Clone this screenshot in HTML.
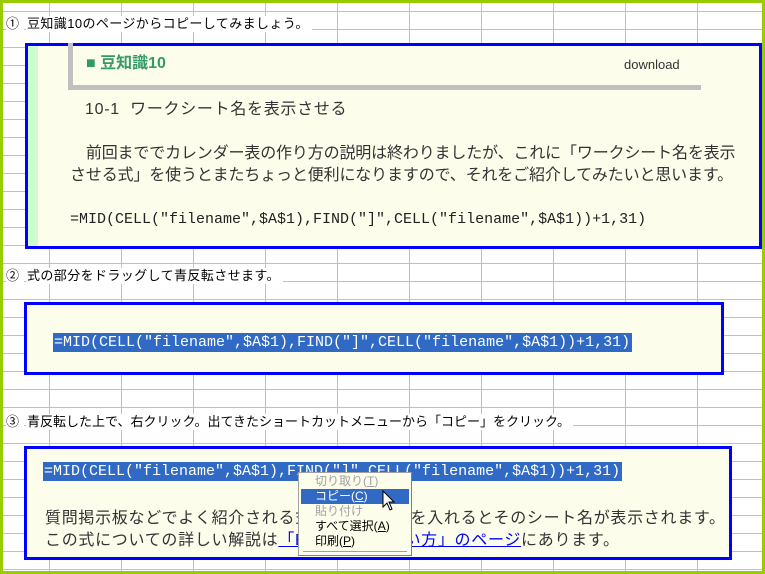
<!DOCTYPE html>
<html><head><meta charset="utf-8"><style>
*{margin:0;padding:0;box-sizing:border-box}
body{width:765px;height:574px;overflow:hidden;position:relative;background:#fff;font-family:"Liberation Sans","Noto Sans CJK JP",sans-serif;color:#000}
#grid{position:absolute;left:0;top:0;width:765px;height:574px;
background-image:repeating-linear-gradient(to right,transparent 0,transparent 24px,#c0c0c0 24px,#c0c0c0 25px,transparent 25px,transparent 72px),
repeating-linear-gradient(to bottom,transparent 0,transparent 14px,#c0c0c0 14px,#c0c0c0 15px,transparent 15px,transparent 18px);
background-size:72px 100%,100% 18px;background-position:25px 0,0 15px;}
#frame{position:absolute;left:0;top:0;width:765px;height:574px;border:3px solid #99cc00}
.a{position:absolute;white-space:nowrap}
.step{font-size:13px;line-height:16px;background:#fff}
.box{position:absolute;border:3px solid #0000ff;background:#fdfdec}
.j{font-size:16px;color:#333;line-height:20px;letter-spacing:0.7px}
.f{font-family:"Liberation Mono",monospace;font-size:15px;line-height:19px;color:#222}
.sel{background:#316ac5;color:#fff}
.menu{position:absolute;left:298px;top:472px;width:114px;height:84px;background:#fdfdec;border:1px solid #a0a0a0;border-right-color:#808080;border-bottom-color:#808080;font-size:12px;line-height:15px}
.menu div{padding-left:16px;height:15px}
</style></head><body>
<div id="grid"></div>
<div class="a step" style="left:6px;top:16px;width:18px">①</div>
<div class="a step" style="left:26px;top:16px;padding:0 3px 0 1px;letter-spacing:0.4px">豆知識10のページからコピーしてみましょう。</div>
<div class="a step" style="left:6px;top:268px;width:18px">②</div>
<div class="a step" style="left:26px;top:268px;padding:0 3px 0 1px;letter-spacing:0.4px">式の部分をドラッグして青反転させます。</div>
<div class="a step" style="left:6px;top:414px;width:18px">③</div>
<div class="a step" style="left:26px;top:414px;padding:0 3px 0 1px">青反転した上で、右クリック。出てきたショートカットメニューから「コピー」をクリック。</div>

<div class="box" style="left:25px;top:43px;width:737px;height:206px">
 <div style="position:absolute;left:0;top:0;width:10px;height:200px;background:#ccffcc"></div>
 <div style="position:absolute;left:40px;top:-3px;width:633px;height:47px;border-left:5px solid #c0c0c0;border-bottom:5px solid #c0c0c0"></div>
 <div class="a" style="left:58px;top:8px;font-size:16px;font-weight:bold;color:#339966;line-height:20px">■ 豆知識10</div>
 <div class="a" style="left:596px;top:11px;font-size:13px;color:#333">download</div>
 <div class="a j" style="left:57px;top:54px">10-1&nbsp; ワークシート名を表示させる</div>
 <div class="a j" style="left:42px;top:98px;letter-spacing:-0.15px">　前回まででカレンダー表の作り方の説明は終わりましたが、これに「ワークシート名を表示</div>
 <div class="a j" style="left:42px;top:120px;letter-spacing:-0.15px">させる式」を使うとまたちょっと便利になりますので、それをご紹介してみたいと思います。</div>
 <div class="a f" style="left:42px;top:164px">=MID(CELL("filename",$A$1),FIND("]",CELL("filename",$A$1))+1,31)</div>
</div>

<div class="box" style="left:24px;top:302px;width:700px;height:73px">
 <div class="a f sel" style="left:26px;top:28px;padding:0 2px 0 1px;color:#fff">=MID(CELL("filename",$A$1),FIND("]",CELL("filename",$A$1))+1,31)</div>
</div>

<div class="box" style="left:24px;top:446px;width:708px;height:114px">
 <div class="a f sel" style="left:16px;top:13px;padding:0 2px 0 1px;color:#fff">=MID(CELL("filename",$A$1),FIND("]",CELL("filename",$A$1))+1,31)</div>
 <div class="a j" style="left:18px;top:60px">質問掲示板などでよく紹介される式です。この式を入れるとそのシート名が表示されます。</div>
 <div class="a j" style="left:18px;top:82px">この式についての詳しい解説は<span style="color:#0000ff;text-decoration:underline">「Excel関数の使い方」のページ</span>にあります。</div>
</div>

<div class="menu">
 <div style="color:#a0a0a0;margin-top:1px">切り取り(<u>T</u>)</div>
 <div style="background:#316ac5;color:#fff;margin:0 2px;padding-left:14px">コピー(<u>C</u>)</div>
 <div style="color:#a0a0a0">貼り付け</div>
 <div>すべて選択(<u>A</u>)</div>
 <div>印刷(<u>P</u>)</div>
 <div style="position:absolute;left:4px;right:4px;top:78px;height:2px;padding:0;border-top:1px solid #a0a0a0;border-bottom:1px solid #fff"></div>
</div>
<svg class="a" style="left:382px;top:490px" width="14" height="22" viewBox="0 0 14 22"><path d="M1 1 L1 17 L5 13 L8 20 L10 19 L7 12 L12 12 Z" fill="#fff" stroke="#000" stroke-width="1"/></svg>
<div id="frame"></div>
</body></html>
